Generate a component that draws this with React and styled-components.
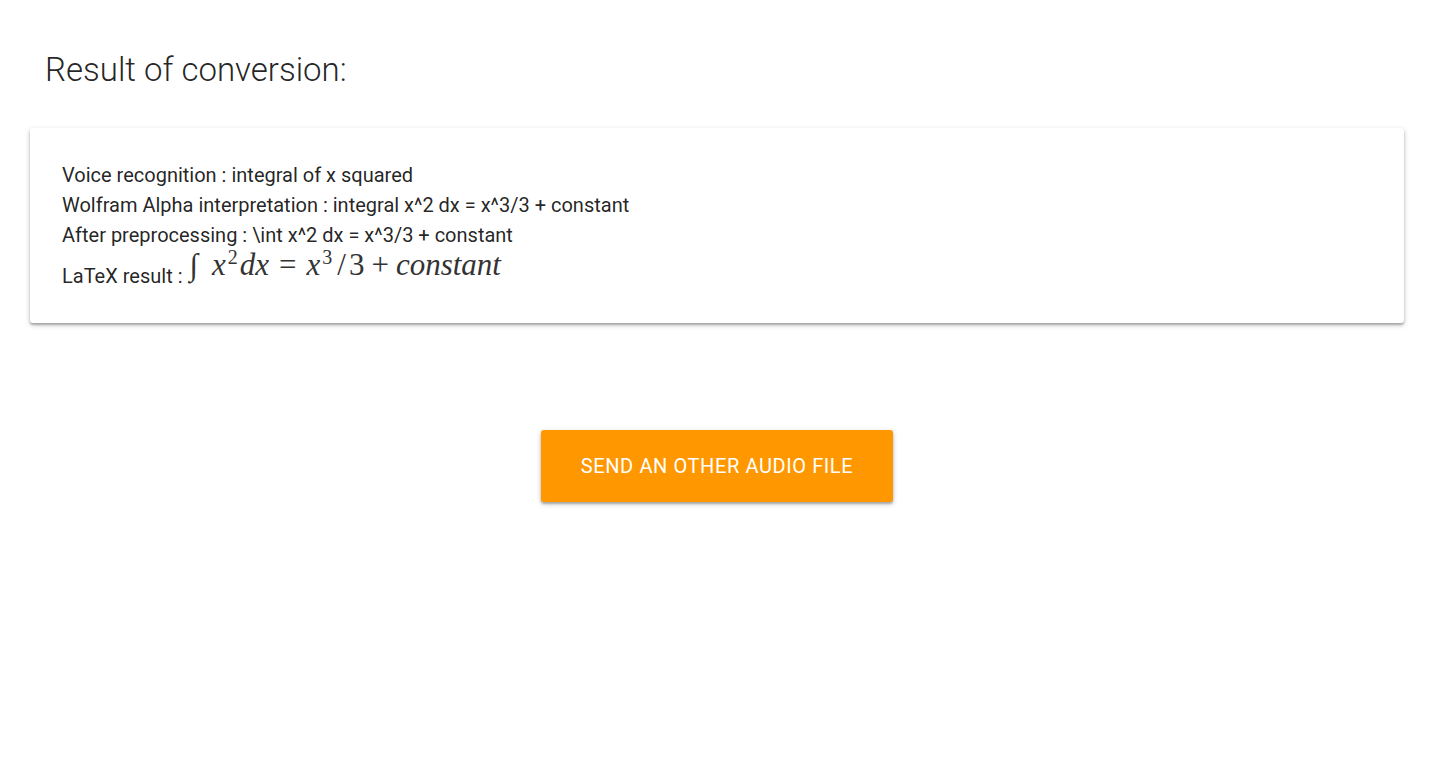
import React from "react";
import styled, { createGlobalStyle } from "styled-components";

const GlobalStyle = createGlobalStyle`
  *, *::before, *::after { box-sizing: border-box; }
  body {
    margin: 0;
    background: #fff;
    color: rgba(0, 0, 0, 0.87);
    font-family: Roboto, sans-serif;
    font-size: 20px;
    line-height: 30px;
  }
`;

const Page = styled.main`
  padding: 48px 25px 48px 30px;
`;

const Title = styled.h1`
  margin: 0 0 36px;
  padding-left: 15px;
  font-size: 33px;
  font-weight: 300;
  line-height: 44px;
`;

const raised = `
  box-shadow: 0 2px 5px 0 rgba(0, 0, 0, 0.24), 0 2px 2px 0 rgba(0, 0, 0, 0.2);
`;

const Card = styled.section`
  padding: 32px;
  border-radius: 3px;
  background: #fff;
  ${raised}
`;

const Line = styled.p`
  margin: 0;
`;

const FormulaLine = styled.p`
  display: flex;
  align-items: flex-end;
  gap: 7px;
  height: 41px;
  margin: 0;
`;

const Formula = styled.span`
  display: flex;
  align-items: baseline;
  align-self: flex-start;
  color: #333;
  font-family: "Liberation Serif", serif;
  font-size: 31px;
  font-style: italic;
  line-height: 30px;
`;

const Integral = styled.span`
  margin-right: 14px;
`;

const Upright = styled.span`
  margin: 0 ${(props) => props.$space || 0}px;
  font-style: normal;
`;

const Power = styled.sup`
  align-self: flex-start;
  margin: 0 2px;
  font-size: 20px;
  font-style: normal;
  line-height: 14px;
`;

const Actions = styled.div`
  display: flex;
  justify-content: center;
  padding-top: 107px;
`;

const Button = styled.button`
  height: 72px;
  padding: 0 40px;
  border: 0;
  border-radius: 3px;
  background: #ff9800;
  color: #fff;
  font: 400 20px/30px Roboto, sans-serif;
  letter-spacing: 0.03em;
  text-transform: uppercase;
  cursor: pointer;
  ${raised}
`;

export default function App() {
  return (
    <>
      <GlobalStyle />
      <Page>
        <Title>Result of conversion:</Title>
        <Card>
          <Line>Voice recognition : integral of x squared</Line>
          <Line>Wolfram Alpha interpretation : integral x^2 dx = x^3/3 + constant</Line>
          <Line>After preprocessing : \int x^2 dx = x^3/3 + constant</Line>
          <FormulaLine>
            <span>LaTeX result :</span>
            <Formula>
              <Integral>∫</Integral>
              <span>x</span>
              <Power>2</Power>
              <span>dx</span>
              <Upright $space={10}>=</Upright>
              <span>x</span>
              <Power>3</Power>
              <Upright $space={3}>/</Upright>
              <Upright>3</Upright>
              <Upright $space={7}>+</Upright>
              <span>constant</span>
            </Formula>
          </FormulaLine>
        </Card>
        <Actions>
          <Button type="button">Send an other audio file</Button>
        </Actions>
      </Page>
    </>
  );
}
